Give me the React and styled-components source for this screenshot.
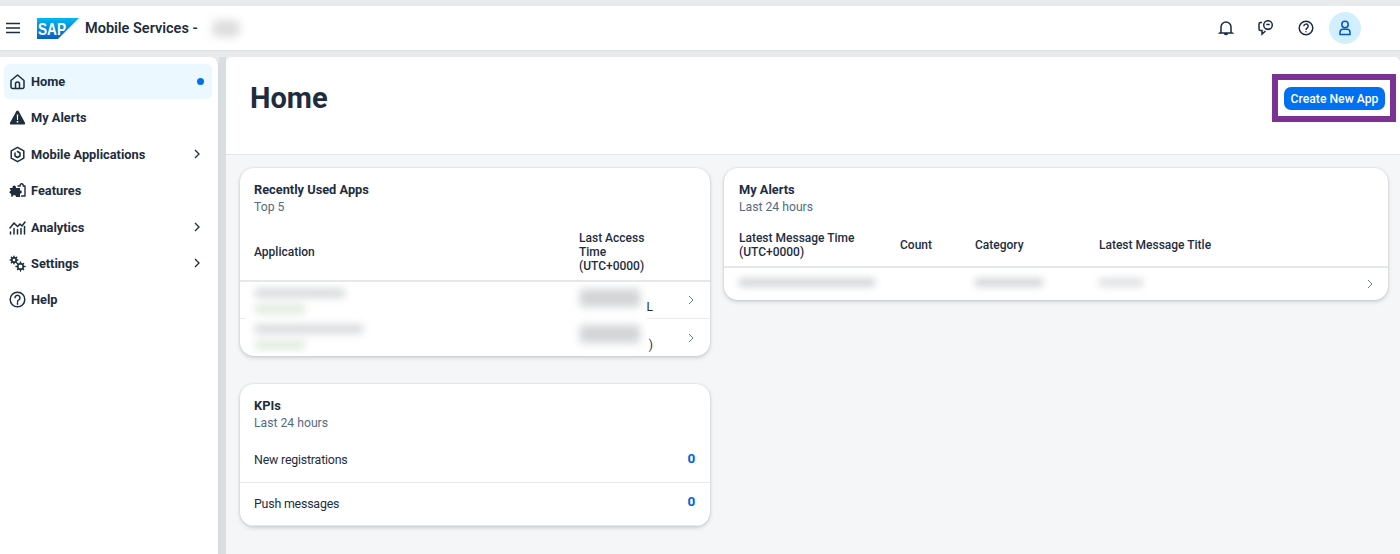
import React from "react";
import styled, { createGlobalStyle } from "styled-components";

const Global = createGlobalStyle`
  html, body { margin: 0; padding: 0; height: 100%; overflow: hidden; }
  body { font-family: Roboto, "Liberation Sans", sans-serif; color: #1d2d3e; background: #e8e9eb; }
  * { box-sizing: border-box; }
`;

const Page = styled.div`
  width: 1400px;
  height: 554px;
  padding-top: 6px;
  display: flex;
  flex-direction: column;
  background: #e9eaec;
  overflow: hidden;
`;
const Shell = styled.header`
  height: 44px;
  flex: none;
  background: #fff;
  display: flex;
  align-items: center;
  padding: 0 39px 0 6px;
  box-shadow: 0 1px 2px rgba(0, 0, 0, 0.06);
`;
const Burger = styled.span`
  display: flex;
  width: 14px;
  margin-right: 17px;
`;
const Logo = styled.svg`
  width: 42px;
  height: 21px;
  flex: none;
  margin-right: 6px;
`;
const Product = styled.span`
  font-size: 14.5px;
  font-weight: 600;
  line-height: 20px;
  padding-top: 1px;
`;
const NameMask = styled.span`
  width: 28px;
  height: 17px;
  margin-left: 14px;
  background: #d2d2d2;
  border-radius: 6px;
  filter: blur(4px);
  opacity: 0.75;
`;
const ShellActions = styled.div`
  margin-left: auto;
  display: flex;
  align-items: center;
  gap: 24px;
`;
const ShellIcon = styled.svg`
  width: 16px;
  height: 16px;
  display: block;
  fill: none;
  stroke: #1d2d3e;
  stroke-width: 1.5;
`;
const Avatar = styled.div`
  width: 32px;
  height: 32px;
  border-radius: 50%;
  background: #d1efff;
  display: flex;
  align-items: center;
  justify-content: center;
  margin-left: -9px;
`;
const Body = styled.div`
  flex: 1;
  min-height: 0;
  display: flex;
  margin-top: 7px;
`;
const Side = styled.nav`
  width: 219px;
  flex: none;
  background: #fff;
  border-right: 1px solid #d5dadd;
  padding: 7px 6px 0 4px;
  border-radius: 0 8px 0 0;
  display: flex;
  flex-direction: column;
  gap: 1.4px;
`;
const Gutter = styled.div`
  width: 7px;
  flex: none;
  background: #d9dee1;
`;
const NavItem = styled.div`
  height: 35px;
  display: flex;
  align-items: center;
  padding: 0 6px 0 5px;
  border-radius: 6px;
  background: ${(p) => (p.$active ? "#ebf8ff" : "transparent")};
  font-size: 12.8px;
  font-weight: 700;
`;
const NavIcon = styled.svg`
  width: 17px;
  height: 17px;
  flex: none;
  margin-right: 5px;
  fill: none;
  stroke: #1d2d3e;
  stroke-width: 1.5;
  stroke-linecap: round;
  stroke-linejoin: round;
`;
const NavTail = styled.span`
  margin-left: auto;
  display: flex;
  align-items: center;
  justify-content: ${(p) => (p.$end ? "flex-end" : "center")};
  width: 14px;
  margin-right: 2px;
`;
const Dot = styled.span`
  width: 7px;
  height: 7px;
  border-radius: 50%;
  background: #0070f2;
`;
const Main = styled.main`
  flex: 1;
  min-width: 0;
  background: #f5f6f7;
  border-radius: 6px 6px 0 0;
  overflow: hidden;
`;
const PageHead = styled.div`
  height: 98px;
  background: #fff;
  border-bottom: 1px solid #e3e5e7;
  display: flex;
  justify-content: space-between;
  padding: 17px 4px 0 24px;
`;
const Title = styled.h1`
  margin: 0;
  font-size: 29px;
  font-weight: 700;
  line-height: 48px;
`;
const Highlight = styled.div`
  width: 124px;
  height: 48px;
  border: 6px solid #7b3294;
  background: #fff;
  padding: 7px 0 0 6px;
`;
const Primary = styled.button`
  display: block;
  width: 101px;
  height: 23px;
  border: 0;
  border-radius: 7px;
  background: #0070f2;
  color: #fff;
  padding: 1px 0 0;
  font: 500 12.2px/22px Roboto, sans-serif;
`;
const Columns = styled.div`
  display: grid;
  grid-template-columns: 470px 664px;
  gap: 0 14px;
  padding: 13px 0 0 14px;
`;
const Stack = styled.div`
  display: flex;
  flex-direction: column;
  gap: 28px;
  align-items: stretch;
`;
const Card = styled.section`
  background: #fff;
  border-radius: 14px;
  box-shadow: 0 0 2px rgba(34, 53, 72, 0.18), 0 2px 4px rgba(34, 53, 72, 0.18);
  overflow: hidden;
  align-self: start;
  width: 100%;
`;
const CardHead = styled.div`
  padding: 14px ${(p) => p.$pad || 14}px 0;
  height: ${(p) => p.$h || 56}px;
`;
const CardTitle = styled.div`
  font-size: 12.8px;
  font-weight: 700;
  line-height: 16px;
`;
const CardSub = styled.div`
  font-size: 12.2px;
  line-height: 18px;
  margin-top: 0;
  color: #556b82;
`;
const TableRow = styled.div`
  display: grid;
  grid-template-columns: ${(p) => p.$cols};
  align-items: center;
  height: ${(p) => p.$h}px;
  padding: 0 7px 0 ${(p) => p.$pad || 14}px;
  border-bottom: ${(p) => p.$line || "1px solid #e9ebed"};
  font-size: 12px;
  line-height: 14px;
  font-weight: ${(p) => (p.$head ? 500 : 400)};
`;
const Rows = styled.div`
  position: relative;
`;
const Residual = styled.span`
  align-self: end;
  justify-self: end;
  margin: 0 26px 4px 0;
  font-size: 12px;
  line-height: 14px;
  color: #1d2d3e;
`;
const RowsMask = styled.div`
  position: absolute;
  top: 2px;
  bottom: 3px;
  left: 6px;
  width: 401px;
  background: #fff;
  display: grid;
  grid-template-columns: 325px 1fr;
  grid-template-rows: 36px 30px;
  padding: 5px 0 0 9px;
  overflow: hidden;
`;
const MaskCell = styled.div`
  display: flex;
  flex-direction: column;
  gap: ${(p) => p.$gap ?? 8}px;
  filter: blur(4px);
`;
const Bar = styled.span`
  display: block;
  width: ${(p) => p.$w}px;
  height: ${(p) => p.$h || 7}px;
  background: ${(p) => p.$c || "#d2d4d6"};
`;
const AlertCell = styled.div`
  filter: blur(3.5px);
  margin-top: -3px;
`;
const Chevron = styled.svg`
  width: ${(p) => p.$s || 10}px;
  height: ${(p) => p.$s || 10}px;
  fill: none;
  stroke: ${(p) => p.$c || "#6a7f95"};
  stroke-width: ${(p) => p.$w || 1};
  justify-self: center;
  display: block;
`;
const KpiRow = styled.div`
  height: 43.5px;
  display: flex;
  align-items: center;
  justify-content: space-between;
  padding: 0 15px 1px 14px;
  border-bottom: 1px solid #e6e8ea;
  font-size: 12.4px;
  letter-spacing: -0.2px;
`;
const KpiValue = styled.span`
  color: #0064d9;
  font-size: 13.5px;
  font-weight: 700;
  position: relative;
  top: -2px;
`;

const Chev = (p) => (
  <Chevron viewBox="0 0 10 10" {...p}>
    <path d="M3 1l4 4-4 4" />
  </Chevron>
);

const cols1 = "325px 100px 1fr";
const cols1Head = "325px 1fr";
const cols2 = "161px 75px 124px 1fr 22px";

export default function App() {
  return (
    <Page>
      <Global />
      <Shell>
        <Burger>
          <ShellIcon viewBox="0 0 14 14" style={{ width: 14, height: 14 }}>
            <path d="M0 2.500h14M0 7h14M0 11.500h14" />
          </ShellIcon>
        </Burger>
        <Logo viewBox="0 0 42 21">
          <defs>
            <linearGradient id="sapg" x1="0" y1="0" x2="0" y2="1">
              <stop offset="0" stopColor="#00b8f1" />
              <stop offset="1" stopColor="#0a5fc0" />
            </linearGradient>
          </defs>
          <path d="M0 0h42L21 21H0z" fill="url(#sapg)" />
          <text x="1" y="16.500" fontFamily="Liberation Sans, sans-serif" fontWeight="700" fontSize="17" fill="#fff" textLength="28" lengthAdjust="spacingAndGlyphs">
            SAP
          </text>
        </Logo>
        <Product>Mobile Services -</Product>
        <NameMask />
        <ShellActions>
          <ShellIcon viewBox="0 0 16 16">
            <path d="M3 12V7a5 5 0 0 1 10 0v5l1.200 1H1.800zM6.500 13.500a1.600 1.600 0 0 0 3 0" />
          </ShellIcon>
          <ShellIcon viewBox="0 0 16 16">
            <circle cx="10" cy="5" r="4.300" />
            <path d="M8.300 4.500h3.400M7 8.500c1.800 1.200 4.200 1.200 6 0M4 2.500H2.500C1.500 2.500 1 3.300 1 4v5c0 1 .8 1.500 1.500 1.500H4v3.500l3.500-3" />
          </ShellIcon>
          <ShellIcon viewBox="0 0 16 16">
            <circle cx="8" cy="8" r="6.800" />
            <path d="M5.800 6.300a2.200 2.200 0 1 1 3.300 1.900c-.8.500-1.100.9-1.100 1.800M8 11.300v1" />
          </ShellIcon>
          <Avatar>
            <ShellIcon viewBox="0 0 16 16" style={{ stroke: "#0057d2" }}>
              <circle cx="8" cy="4.500" r="3.200" />
              <path d="M3 14.500h10v-2c0-2-1.500-3.200-3-3.200H6c-1.500 0-3 1.200-3 3.200z" />
            </ShellIcon>
          </Avatar>
        </ShellActions>
      </Shell>
      <Body>
        <Side>
          <NavItem $active>
            <NavIcon viewBox="0 0 17 17">
              <path d="M2 7.500L8.500 2 15 7.500V14a1.500 1.500 0 0 1-1.500 1.500h-10A1.500 1.500 0 0 1 2 14zM6.500 15.500V11a2 2 0 0 1 4 0v4.500" />
            </NavIcon>
            Home
            <NavTail $end>
              <Dot />
            </NavTail>
          </NavItem>
          <NavItem>
            <NavIcon viewBox="0 0 17 17" style={{ stroke: "none" }}>
              <path fill="#1d2d3e" d="M8.500 1.500c.5 0 .9.300 1.200.8l6.300 11.400c.5 1-.1 1.800-1.100 1.800H2.100c-1 0-1.600-.9-1.100-1.800L7.300 2.300c.3-.5.700-.8 1.200-.8z" />
              <path fill="#fff" d="M7.800 5.500h1.400l-.2 5.500H8zM7.700 12h1.600v1.600H7.700z" />
            </NavIcon>
            My Alerts
          </NavItem>
          <NavItem>
            <NavIcon viewBox="0 0 17 17">
              <path d="M8.500 1.300l6.300 3.600v7.200l-6.300 3.600-6.300-3.600V4.900z" />
              <path d="M6 7v3l2.500 1.500L11 10V7L8.500 5.500" />
            </NavIcon>
            Mobile Applications
            <NavTail>
              <Chev $s={10} $c="#1d2d3e" $w={1.3} />
            </NavTail>
          </NavItem>
          <NavItem>
            <NavIcon viewBox="0 0 17 17" style={{ stroke: "none" }}>
              <path fill="#1d2d3e" d="M.5 6h3C3.200 4.500 4 3.500 5.200 3.500S7.200 4.500 7 6h4v2.500c1.300-.3 1.800.5 1.800 1.500s-.6 1.800-1.800 1.500V15H7c.2-1.300-.5-1.800-1.700-1.800S3.300 13.800 3.500 15h-1l-.5-3.500c-1 .2-1.500-.5-1.500-1.300S1 8.700 2 9z" />
              <path fill="none" stroke="#1d2d3e" strokeWidth="1.400" d="M9 4h2.200c-.2-1.500.6-2.300 1.500-2.300s1.700.8 1.500 2.300H16v10h-3.500" />
            </NavIcon>
            Features
          </NavItem>
          <NavItem>
            <NavIcon viewBox="0 0 17 17">
              <path d="M1 9l4-5 3.500 3.500L11 5l2 2 3-4M1.500 15v-2M5 15V9.500M8.500 15v-4.500M12 15V9.500M15.500 15V7.500" />
            </NavIcon>
            Analytics
            <NavTail>
              <Chev $s={10} $c="#1d2d3e" $w={1.3} />
            </NavTail>
          </NavItem>
          <NavItem>
            <NavIcon viewBox="0 0 17 17">
              <circle cx="5" cy="5" r="2.200" />
              <path d="M5 1.200v1.600M5 7.200v1.600M1.200 5h1.600M7.200 5h1.600M2.400 2.400l1 1M6.600 6.600l1 1M7.600 2.400l-1 1M2.400 7.600l1-1" />
              <circle cx="11.500" cy="11.500" r="2.800" />
              <path d="M11.500 7v1.700M11.500 14.300V16M7 11.500h1.700M14.300 11.500H16M8.500 8.500l1 1M13.500 13.500l1 1M14.500 8.500l-1 1M8.500 14.500l1-1" />
            </NavIcon>
            Settings
            <NavTail>
              <Chev $s={10} $c="#1d2d3e" $w={1.3} />
            </NavTail>
          </NavItem>
          <NavItem>
            <NavIcon viewBox="0 0 17 17">
              <circle cx="8.500" cy="8.500" r="7.300" />
              <path d="M6 6.800a2.500 2.500 0 1 1 3.800 2.100c-.9.500-1.300 1-1.300 2M8.500 12.300v1" />
            </NavIcon>
            Help
          </NavItem>
        </Side>
        <Gutter />
        <Main>
          <PageHead>
            <Title>Home</Title>
            <Highlight>
              <Primary>Create New App</Primary>
            </Highlight>
          </PageHead>
          <Columns>
            <Stack>
              <Card>
                <CardHead>
                  <CardTitle>Recently Used Apps</CardTitle>
                  <CardSub>Top 5</CardSub>
                </CardHead>
                <TableRow $cols={cols1Head} $h={58} $head $line="2px solid #e5e7e9">
                  <span>Application</span>
                  <span>
                    Last Access
                    <br />
                    Time
                    <br />
                    (UTC+0000)
                  </span>
                </TableRow>
                <Rows>
                  <TableRow $cols={cols1} $h={37}>
                    <span />
                    <Residual>L</Residual>
                    <Chev />
                  </TableRow>
                  <TableRow $cols={cols1} $h={37} $line="0">
                    <span />
                    <Residual>)</Residual>
                    <Chev />
                  </TableRow>
                  <RowsMask>
                    <MaskCell>
                      <Bar $w={90} $h={8} />
                      <Bar $w={50} $h={8} $c="#dbe8d8" />
                    </MaskCell>
                    <MaskCell $gap={0}>
                      <Bar $w={60} $h={18} />
                    </MaskCell>
                    <MaskCell>
                      <Bar $w={108} $h={8} />
                      <Bar $w={50} $h={8} $c="#dbe8d8" />
                    </MaskCell>
                    <MaskCell $gap={0}>
                      <Bar $w={60} $h={18} />
                    </MaskCell>
                  </RowsMask>
                </Rows>
              </Card>
              <Card>
                <CardHead $h={55}>
                  <CardTitle>KPIs</CardTitle>
                  <CardSub>Last 24 hours</CardSub>
                </CardHead>
                <KpiRow>
                  New registrations
                  <KpiValue>0</KpiValue>
                </KpiRow>
                <KpiRow>
                  Push messages
                  <KpiValue>0</KpiValue>
                </KpiRow>
              </Card>
            </Stack>
            <Card>
              <CardHead $pad={15}>
                <CardTitle>My Alerts</CardTitle>
                <CardSub>Last 24 hours</CardSub>
              </CardHead>
              <TableRow $cols={cols2} $h={44} $pad={15} $head $line="2px solid #e5e7e9">
                <span>
                  Latest Message Time
                  <br />
                  (UTC+0000)
                </span>
                <span>Count</span>
                <span>Category</span>
                <span>Latest Message Title</span>
              </TableRow>
              <TableRow $cols={cols2} $h={32} $pad={15} $line="0">
                <AlertCell>
                  <Bar $w={136} $h={9} $c="#d6d8da" />
                </AlertCell>
                <span />
                <AlertCell>
                  <Bar $w={68} $h={9} $c="#d6d8da" />
                </AlertCell>
                <AlertCell>
                  <Bar $w={44} $h={9} $c="#e0e2e4" />
                </AlertCell>
                <Chev />
              </TableRow>
            </Card>
          </Columns>
        </Main>
      </Body>
    </Page>
  );
}
